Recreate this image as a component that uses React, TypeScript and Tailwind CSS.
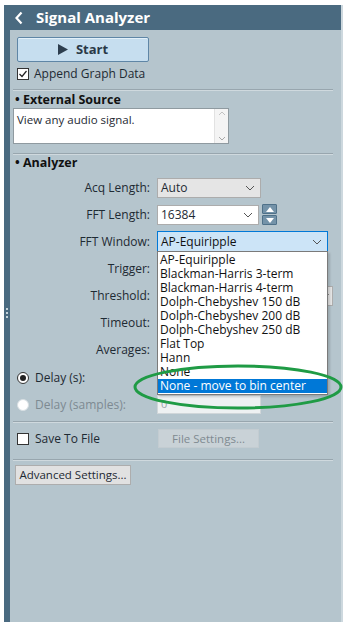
import React from 'react';

const FONT = { fontFamily: '"Open Sans", "Noto Sans", Arial, sans-serif' };

const WINDOWS = [
  'AP-Equiripple',
  'Blackman-Harris 3-term',
  'Blackman-Harris 4-term',
  'Dolph-Chebyshev 150 dB',
  'Dolph-Chebyshev 200 dB',
  'Dolph-Chebyshev 250 dB',
  'Flat Top',
  'Hann',
  'None',
  'None - move to bin center',
];

function Chevron({ color = '#555' }: { color?: string }) {
  return (
    <svg width="10" height="6" viewBox="0 0 10 6" className="shrink-0">
      <polyline points="1,1 5,5 9,1" fill="none" stroke={color} strokeWidth="1" />
    </svg>
  );
}

function Separator() {
  return <div className="mx-[3px] mr-[8px] h-px bg-[#98a6ae] shadow-[0_1px_0_#cfd9de]" />;
}

function Row({ label, children, className = '' }: { label: React.ReactNode; children?: React.ReactNode; className?: string }) {
  return (
    <div className={`flex h-[27px] items-center ${className}`}>
      <div className="flex w-[140px] shrink-0 items-center justify-end pr-0 text-[12px] text-[#1e2a33]">{label}</div>
      <div className="ml-[7px] flex min-w-0 flex-1 items-center">{children}</div>
    </div>
  );
}

function RadioRow({ label, checked, disabled, children }: { label: string; checked?: boolean; disabled?: boolean; children?: React.ReactNode }) {
  return (
    <div className="flex h-[27px] items-center">
      <div className="flex w-[140px] shrink-0 items-center pl-[7px]">
        <span className={`flex h-[12px] w-[12px] items-center justify-center rounded-full border ${disabled ? 'border-[#d8dfe3] bg-white' : 'border-[#333] bg-white'}`}>
          {checked && <span className="h-[6px] w-[6px] rounded-full bg-[#222]" />}
        </span>
        <span className={`ml-[6px] text-[12px] ${disabled ? 'text-[#7d8a92]' : 'text-[#1e2a33]'}`}>{label}</span>
      </div>
      <div className="ml-[7px] flex flex-1 items-center">{children}</div>
    </div>
  );
}

export default function App() {
  return (
    <div className="relative h-[627px] w-[350px] overflow-hidden bg-white" style={FONT}>
      <div className="absolute left-[4px] top-[5px] flex h-[617px] w-[339px] flex-col border-r-2 border-[#cdd8de]">
        {/* title bar */}
        <div className="flex h-[25px] shrink-0 items-center bg-[#4a6a80] pl-[10px]">
          <svg width="10" height="14" viewBox="0 0 10 14">
            <polyline points="7.5,1.5 2.5,7 7.5,12.5" fill="none" stroke="#fff" strokeWidth="2.2" />
          </svg>
          <span className="ml-[12px] text-[15px] font-bold text-white">Signal Analyzer</span>
        </div>

        <div className="flex min-h-0 flex-1">
          {/* left grip bar */}
          <div className="relative w-[6px] shrink-0 bg-[#4a6a80]">
            <div className="absolute left-[2px] top-[278px] flex flex-col gap-[2px]">
              <span className="h-[2px] w-[2px] bg-[#c5d3da]" />
              <span className="h-[2px] w-[2px] bg-[#c5d3da]" />
              <span className="h-[2px] w-[2px] bg-[#c5d3da]" />
            </div>
          </div>

          <div className="relative flex flex-1 flex-col bg-[#b5c5cd] pt-[7px]">
            <button className="ml-[7px] flex h-[25px] w-[132px] items-center justify-center gap-[8px] rounded-[2px] border border-[#5f86a6] bg-[#c6deef] text-[13px] font-bold text-[#2a3947] shadow-[inset_0_1px_0_#e3f0f9]">
              <svg width="10" height="11" viewBox="0 0 10 11">
                <polygon points="0,0 10,5.5 0,11" fill="#2d3e4e" />
              </svg>
              Start
            </button>

            <div className="ml-[7px] mt-[4px] flex h-[16px] items-center">
              <span className="flex h-[12px] w-[12px] items-center justify-center border border-[#333] bg-white">
                <svg width="10" height="10" viewBox="0 0 10 10">
                  <polyline points="1.5,5 4,7.5 8.5,2" fill="none" stroke="#222" strokeWidth="1.2" />
                </svg>
              </span>
              <span className="ml-[5px] text-[12px] text-[#1e2a33]">Append Graph Data</span>
            </div>

            <div className="mt-[7px]"><Separator /></div>

            <div className="ml-[5px] mt-[2px] flex h-[16px] items-center text-[12.5px] font-bold text-[#111]">• External Source</div>

            <div className="ml-[3px] flex h-[36px] w-[216px] border border-[#8f9aa0] bg-white">
              <div className="flex-1 px-[3px] pt-[2px] text-[11.5px] text-[#1e2a33]">View any audio signal.</div>
              <div className="flex w-[14px] flex-col items-center justify-between border-l border-[#e2e2e2] bg-[#f4f4f4] py-[2px]">
                <svg width="8" height="5" viewBox="0 0 8 5"><polyline points="1,4 4,1 7,4" fill="none" stroke="#c2c2c2" /></svg>
                <svg width="8" height="5" viewBox="0 0 8 5"><polyline points="1,1 4,4 7,1" fill="none" stroke="#a8a8a8" /></svg>
              </div>
            </div>

            <div className="mt-[9px]"><Separator /></div>

            <div className="ml-[5px] mt-[1px] flex h-[16px] items-center text-[12.5px] font-bold text-[#111]">• Analyzer</div>

            <div className="mt-[3px]">
              <Row label="Acq Length:">
                <div className="flex h-[20px] w-[104px] items-center justify-between border border-[#acacac] bg-[#e5e5e5] pl-[3px] pr-[5px] text-[12px] text-[#1e2a33]">
                  Auto <Chevron />
                </div>
              </Row>
              <Row label="FFT Length:">
                <div className="flex h-[20px] w-[102px] items-center justify-between border border-[#acacac] bg-white pl-[3px] pr-[5px] text-[12px] text-[#1e2a33]">
                  16384 <Chevron />
                </div>
                <div className="ml-[3px] flex h-[21px] w-[15px] flex-col gap-px">
                  <div className="flex flex-1 items-center justify-center rounded-[1px] border border-[#4f7189] bg-[#7493a9]">
                    <svg width="8" height="5" viewBox="0 0 8 5"><polygon points="0,5 4,0 8,5" fill="#fff" /></svg>
                  </div>
                  <div className="flex flex-1 items-center justify-center rounded-[1px] border border-[#4f7189] bg-[#7493a9]">
                    <svg width="8" height="5" viewBox="0 0 8 5"><polygon points="0,0 8,0 4,5" fill="#fff" /></svg>
                  </div>
                </div>
              </Row>
              <Row label="FFT Window:">
                <div className="flex h-[21px] w-[171px] items-center justify-between border border-[#0078d7] bg-[#cce4f7] pl-[3px] pr-[5px] text-[12px] text-[#111]">
                  AP-Equiripple <Chevron />
                </div>
              </Row>
              <Row label="Trigger:">
                <div className="h-[20px] w-[171px] border border-[#acacac] bg-[#e5e5e5]" />
              </Row>
              <Row label="Threshold:">
                <div className="flex h-[20px] w-[176px] items-center justify-end border border-[#acacac] bg-[#e5e5e5] pr-[2px]">
                  <Chevron color="#888" />
                </div>
              </Row>
              <Row label="Timeout:">
                <div className="h-[20px] w-[171px] border border-[#acacac] bg-white" />
              </Row>
              <Row label="Averages:">
                <div className="h-[20px] w-[164px] border border-[#acacac] bg-white" />
                <div className="ml-[1px] flex h-[20px] w-[6px] flex-col gap-px">
                  <div className="flex-1 border border-[#9aa] bg-[#e8e8e8]" />
                  <div className="flex-1 border border-[#9aa] bg-[#e8e8e8]" />
                </div>
              </Row>
              <div className="mt-[1px]">
                <RadioRow label="Delay (s):" checked>
                  <div className="h-[20px] w-[104px] border border-[#acacac] bg-white" />
                </RadioRow>
                <RadioRow label="Delay (samples):" disabled>
                  <div className="flex h-[19px] w-[104px] items-center border border-[#d0d6d9] bg-[#eef1f2] pl-[3px] text-[11px] text-[#9aa4aa]">0</div>
                </RadioRow>
              </div>
            </div>

            <div className="mt-[3px]"><Separator /></div>

            <div className="mt-[3px] flex h-[27px] items-center">
              <div className="flex w-[140px] shrink-0 items-center pl-[7px]">
                <span className="h-[12px] w-[12px] border border-[#333] bg-white" />
                <span className="ml-[6px] text-[12px] text-[#1e2a33]">Save To File</span>
              </div>
              <div className="ml-[8px] flex h-[19px] w-[101px] items-center justify-center border border-[#c3ccd1] bg-[#c9d2d7] text-[11.5px] text-[#7f8a91]">
                File Settings...
              </div>
            </div>

            <div className="mt-[7px]"><Separator /></div>

            <div className="ml-[5px] mt-[5px] flex h-[20px] w-[116px] items-center justify-center border border-[#adadad] bg-[#e1e1e1] text-[11.5px] text-[#1e2a33]">
              Advanced Settings...
            </div>

            {/* open FFT Window dropdown list */}
            <div className="absolute left-[147px] top-[221px] flex w-[171px] flex-col border border-[#7a7a7a] bg-white py-[1px] shadow-[2px_2px_2px_rgba(0,0,0,0.15)]">
              {WINDOWS.map((w, i) => (
                <div
                  key={w}
                  className={`h-[14px] pl-[2px] text-[12px] leading-[14px] ${i === WINDOWS.length - 1 ? 'bg-[#0078d7] text-white' : 'text-[#111]'}`}
                >
                  {w}
                </div>
              ))}
            </div>
          </div>
        </div>
      </div>

      {/* green annotation ellipse */}
      <svg className="pointer-events-none absolute left-0 top-0" width="350" height="627">
        <ellipse cx="238" cy="387" rx="103" ry="21" fill="none" stroke="#1f9b45" strokeWidth="3" />
      </svg>
    </div>
  );
}
